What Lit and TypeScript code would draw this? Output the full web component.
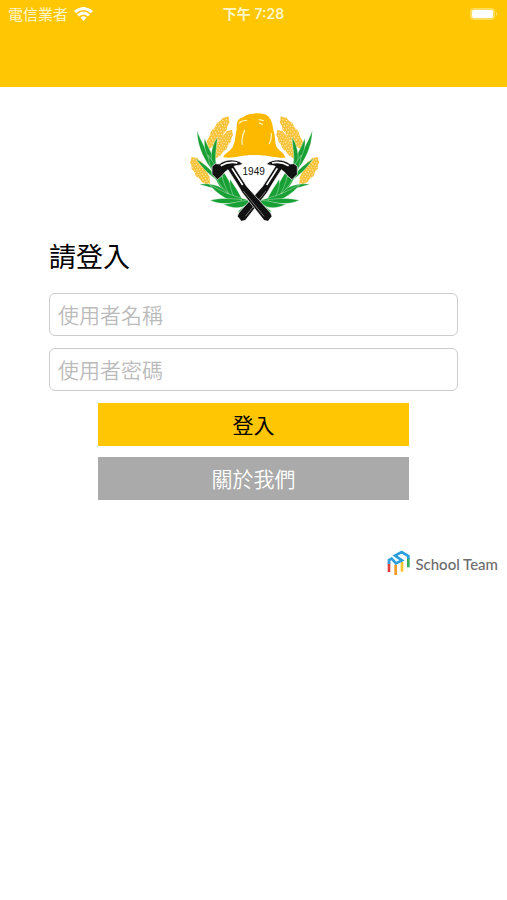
import { LitElement, html, css, svg } from "lit";
import { customElement } from "lit/decorators.js";

const leaves = [
  "M100 200 C76 170 52 130 51 76 C64 114 88 150 114 202Z",
  "M102 180 C84 160 68 130 74 100 C84 130 100 150 112 182Z",
  "M96 176 C90 150 96 122 112 96 C110 130 104 150 108 180Z",
  "M112 226 C80 205 62 180 46 160 C76 180 104 200 124 238Z",
  "M122 248 C96 210 88 180 84 150 C110 186 130 220 142 262Z",
  "M132 264 C108 250 84 246 58 238 C92 232 122 242 150 266Z",
  "M140 262 C110 232 102 208 104 182 C124 212 146 240 156 272Z",
  "M150 274 C132 240 124 218 126 194 C146 222 160 250 166 280Z",
  "M168 286 C154 262 148 244 150 222 C168 250 184 272 190 294Z",
  "M206 298 C150 296 112 268 86 236 C134 266 170 276 210 286Z",
  "M180 290 C150 296 120 300 90 286 C120 278 150 280 186 284Z",
  "M206 296 C180 314 156 310 130 298 C160 296 180 286 206 286Z",
  "M216 300 C204 318 192 322 172 320 C184 312 192 302 206 296Z",
];

const ear = (transform: string) => svg`
  <g transform=${transform}>
    <path class="gold" d="M0 0 L7 7 L12 10 L13 20 L18 28 L16 40 L19 52 L14 64 L13 76 L6 88 L0 102 L-6 88 L-13 76 L-14 64 L-19 52 L-16 40 L-18 28 L-13 20 L-12 10 L-7 7Z"></path>
    <path class="grain" d="M0 8V94 M-7 14V84 M7 14V84 M-14 26V66 M14 26V66"></path>
  </g>`;

const half = svg`
  ${ear("translate(146 34) rotate(34) scale(1 1.3)")}
  ${ear("translate(156 74) rotate(32) scale(0.9 1.1)")}
  ${ear("translate(35 156) rotate(-32) scale(1.05 1.05)")}
  ${leaves.map((d) => svg`<path class="leaf" d=${d}></path>`)}
`;

const hammer = svg`
  <path class="steel" d="M96 184 L106 176 L118 177 C136 162 168 160 188 176 C180 183 168 180 162 184 L186 222 L200 244 L272 324 L276 334 L264 349 L252 346 L186 262 L172 238 L144 194 L134 202 L126 212 L112 224 L96 208Z"></path>
  <path class="shine" d="M156 190 L188 240 M122 182 C136 174 154 170 172 174"></path>
  <path class="glow" d="M190 258 L252 334"></path>
`;

@customElement("app-crest")
export class AppCrest extends LitElement {
  static styles = css`
    :host { display: block; line-height: 0; }
    .crest { width: 128px; height: 110px; overflow: visible; }
    .gold { fill: #f8c23a; }
    .grain { fill: none; stroke: #fff0b4; stroke-width: 3; stroke-dasharray: 3 5; }
    .leaf { fill: #18a035; stroke: #fff; stroke-width: 1; }
    .steel { fill: #111; stroke: #fff; stroke-width: 2; }
    .shine { fill: none; stroke: #fff; stroke-width: 5; }
    .glow { fill: none; stroke: #aaa; stroke-width: 2; }
    .helmet { fill: #fdb900; }
    .glint { fill: none; stroke: #fff0b8; stroke-width: 4; stroke-linecap: round; }
    .year { font: 30px "Liberation Sans", Arial, sans-serif; fill: #111; text-anchor: middle; }
  `;
  render() {
    return html`
      <svg class="crest" viewBox="30 21 384 330" role="img" aria-label="1949">
        ${half}
        <g transform="translate(448 0) scale(-1 1)">${half}</g>
        <path class="helmet" d="M130 157 C134 144 150 140 158 126 C167 108 164 98 168 84 C172 70 168 60 173 48 C179 38 190 38 198 31 C208 24 250 22 263 32 C276 44 278 60 280 76 C286 92 284 106 287 118 C290 136 312 140 316 158 C290 160 266 150 222 150 C180 150 164 162 130 157Z"></path>
        <path class="glint" d="M194 76 C186 92 184 104 187 118 M178 54 C186 46 194 46 200 46 M238 44 L250 47 M238 54 L248 58 M274 86 C275 98 273 108 268 116"></path>
        <g transform="translate(448 0) scale(-1 1)">${hammer}</g>
        ${hammer}
        <text class="year" x="221" y="210">1949</text>
      </svg>`;
  }
}

@customElement("app-root")
export class AppRoot extends LitElement {
  static styles = css`
    :host {
      display: block;
      min-height: 100vh;
      background: #fff;
      color: #000;
      font-family: "Noto Sans CJK TC", sans-serif;
    }
    * { box-sizing: border-box; }
    .top { height: 87px; background: #ffc703; color: #fff6c8; }
    .status {
      display: grid;
      grid-template-columns: 1fr auto 1fr;
      align-items: center;
      height: 27px;
      padding: 0 8px;
      font-size: 15px;
      line-height: 20px;
    }
    .carrier { display: flex; align-items: center; gap: 6px; }
    .wifi { width: 19px; height: 14px; fill: none; stroke: #fff; stroke-width: 3; }
    .wifi .dot { fill: #fff; stroke: none; }
    .clock { font-family: Inter, "Noto Sans CJK TC", sans-serif; font-size: 14px; font-weight: 600; }
    .battery { justify-self: end; width: 30px; height: 14px; }
    .main { display: flex; flex-direction: column; padding: 25px 49px 0; }
    .crest { align-self: center; }
    .form { display: flex; flex-direction: column; }
    .title { margin: 14px 0 18px; font-size: 27px; line-height: 39px; font-weight: 400; }
    .field {
      width: 100%;
      height: 43px;
      margin-bottom: 12px;
      padding: 0 8px 2px;
      border: 1px solid #ccc;
      border-radius: 6px;
      background: #fff;
      font: 350 21px "Noto Sans CJK TC", sans-serif;
    }
    .field::placeholder { color: #bbb; opacity: 1; }
    .button {
      height: 43px;
      margin: 0 49px 11px;
      padding: 0 0 2px;
      border: 0;
      font: 400 21px "Noto Sans CJK TC", sans-serif;
    }
    .login { background: #ffc703; color: #000; }
    .about { background: #aaa; color: #fff; font-weight: 350; }
    .brand {
      display: flex;
      justify-content: flex-end;
      align-items: center;
      gap: 5px;
      margin-top: 38px;
      padding-right: 9px;
      color: #6c6c6c;
      font: 500 15px/26px Lato, sans-serif;
    }
    .name { padding-top: 2px; }
    .mark { width: 23px; height: 26px; fill: none; stroke-width: 8; }
  `;
  render() {
    return html`
      <header class="top">
        <div class="status">
          <span class="carrier">電信業者
            <svg class="wifi" viewBox="0 0 19 14" aria-hidden="true">
              <path d="M1 5 Q9.500 -2 18 5 M4 8.500 Q9.500 3.500 15 8.500"></path>
              <path class="dot" d="M6.500 10.500 Q9.500 8 12.500 10.500 L9.500 14Z"></path>
            </svg>
          </span>
          <span class="clock">下午 7:28</span>
          <svg class="battery" viewBox="0 0 30 14" aria-hidden="true">
            <rect x="1" y="1" width="25" height="12" rx="4" fill="#ffdc5c"></rect>
            <rect x="3" y="3" width="21" height="8" rx="2" fill="#fff"></rect>
            <path d="M27 5 Q29 7 27 9Z" fill="#ffe48a"></path>
          </svg>
        </div>
      </header>
      <main class="main">
        <app-crest class="crest"></app-crest>
        <form class="form" @submit=${(e: Event) => e.preventDefault()}>
          <h1 class="title">請登入</h1>
          <input class="field" type="text" placeholder="使用者名稱" aria-label="使用者名稱" />
          <input class="field" type="password" placeholder="使用者密碼" aria-label="使用者密碼" />
          <button class="button login" type="submit">登入</button>
          <button class="button about" type="button">關於我們</button>
        </form>
      </main>
      <footer class="brand">
        <svg class="mark" viewBox="30 30 69 78" aria-hidden="true">
          <path stroke="#e2403a" d="M36 68V96"></path>
          <path stroke="#f49a28" d="M56 74V105"></path>
          <path stroke="#f6c52c" d="M75 66V95"></path>
          <path stroke="#38ad5c" d="M94 54V82"></path>
          <path stroke="#2a9fdc" d="M36 72V60L44 56L57 70L75 61L54 47L74 36L94 48V58"></path>
        </svg>
        <span class="name">School Team</span>
      </footer>`;
  }
}
